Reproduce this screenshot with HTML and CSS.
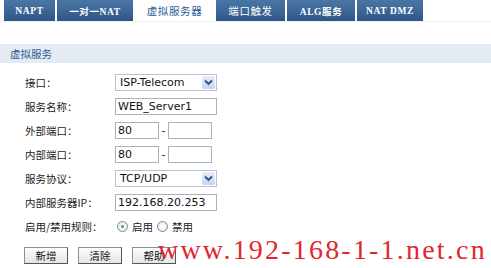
FILE: index.html
```html
<!DOCTYPE html>
<html>
<head>
<meta charset="utf-8">
<link rel="stylesheet" href="styles.css">
</head>
<body>
<div class="tabs">
  <div class="tab t1">NAPT</div>
  <div class="tab t2">一对一NAT</div>
  <div class="tab active t3">虚拟服务器</div>
  <div class="tab t4">端口触发</div>
  <div class="tab t5">ALG服务</div>
  <div class="tab t6">NAT DMZ</div>
</div>
<div class="section">虚拟服务</div>
<div class="form">
  <div class="label">接口：</div>
  <div class="ctl"><div class="select w100"><span>ISP-Telecom</span><i class="arrow"><svg width="9" height="7" viewBox="0 0 9 7"><path d="M1 1.5 L4.5 5 L8 1.5" fill="none" stroke="#2c4f86" stroke-width="1.8"/></svg></i></div></div>
  <div class="label">服务名称：</div>
  <div class="ctl"><div class="input w100">WEB_Server1</div></div>
  <div class="label">外部端口：</div>
  <div class="ctl"><div class="input w43">80</div><span class="dash">-</span><div class="input w43"></div></div>
  <div class="label">内部端口：</div>
  <div class="ctl"><div class="input w43">80</div><span class="dash">-</span><div class="input w43"></div></div>
  <div class="label">服务协议：</div>
  <div class="ctl"><div class="select w100"><span>TCP/UDP</span><i class="arrow"><svg width="9" height="7" viewBox="0 0 9 7"><path d="M1 1.5 L4.5 5 L8 1.5" fill="none" stroke="#2c4f86" stroke-width="1.8"/></svg></i></div></div>
  <div class="label">内部服务器IP：</div>
  <div class="ctl"><div class="input w100">192.168.20.253</div></div>
  <div class="label">启用/禁用规则：</div>
  <div class="ctl radios"><span class="radio on"></span><span class="rlabel">启用</span><span class="radio"></span><span class="rlabel">禁用</span></div>
</div>
<div class="buttons">
  <div class="btn">新增</div>
  <div class="btn">清除</div>
  <div class="btn">帮助</div>
</div>
<div class="watermark">www.192-168-1-1.net.cn</div>
</body>
</html>
```
FILE: styles.css
```css
html, body { margin: 0; padding: 0; background: #fff; }
body { width: 491px; height: 268px; position: relative; overflow: hidden; font-family: "Noto Sans CJK SC", "DejaVu Sans", sans-serif; }
.tabs { display: flex; height: 21px; padding-left: 4px; gap: 2px; border-bottom: 1px solid #eef0f3; }
.tab { height: 21px; box-sizing: border-box; background: linear-gradient(#4a76a6, #2f5786); color: #fff; font-family: "Liberation Serif", "Noto Sans CJK SC", serif; font-weight: bold; font-size: 9.5px; display: flex; align-items: center; justify-content: center; letter-spacing: 0.6px; }
.tab.active { background: #fff; color: #2a5a96; font-family: "Noto Sans CJK SC", sans-serif; font-weight: normal; font-size: 10.5px; }
.t1 { width: 51px; }
.t2 { width: 76px; }
.t3 { width: 79px; }
.t4 { width: 69px; font-family: "Noto Sans CJK SC", sans-serif; font-weight: normal; font-size: 10.5px; }
.t5 { width: 68px; }
.t6 { width: 66px; }
.section { margin-top: 22px; height: 19px; background: #e5ebf2; color: #2a5a96; font-size: 10.5px; line-height: 19px; padding-left: 10px; }
.form { display: grid; grid-template-columns: 90px auto; padding-left: 25px; margin-top: 11px; row-gap: 7px; font-size: 10.5px; color: #222; }
.label { height: 17px; line-height: 17px; }
.ctl { height: 17px; display: flex; align-items: center; }
.input, .select { box-sizing: border-box; height: 17px; border: 1px solid #a9b2bd; font-family: "DejaVu Sans", sans-serif; font-size: 11px; color: #111; line-height: 15px; padding-left: 2px; background: #fff; }
.select { display: flex; justify-content: space-between; border-color: #b8c2cc; padding-left: 4px; }
.w100 { width: 102px; }
.w43 { width: 44px; }
.dash { width: 9px; text-align: center; font-family: "DejaVu Sans", sans-serif; font-size: 11px; }
.arrow { width: 13px; height: 13px; margin: 1px 1px 0 0; background: linear-gradient(#e4ecf8, #c6d6ee); border-radius: 2px; display: flex; align-items: center; justify-content: center; }
.radios { padding-left: 2px; }
.radio { width: 11px; height: 11px; box-sizing: border-box; border: 1px solid #7a8590; border-radius: 50%; background: radial-gradient(#fff, #e6e6e6); position: relative; margin-right: 4px; }
.radio.on::after { content: ""; position: absolute; left: 3px; top: 3px; width: 3px; height: 3px; border-radius: 50%; background: #39a845; }
.rlabel { margin-right: 4px; }
.buttons { display: flex; gap: 10px; padding-left: 24px; margin-top: 12px; }
.btn { width: 44px; height: 17px; box-sizing: border-box; border: 1px solid #8a8f96; border-right-color: #555; border-bottom-color: #555; background: linear-gradient(#fdfdfd, #e6e6e6); font-size: 10.5px; line-height: 15px; text-align: center; color: #111; }
.watermark { position: absolute; left: 158px; top: 234px; color: #e3262d; font-family: "Liberation Serif", serif; font-size: 28px; line-height: 32px; letter-spacing: 2.2px; white-space: nowrap; }
```
